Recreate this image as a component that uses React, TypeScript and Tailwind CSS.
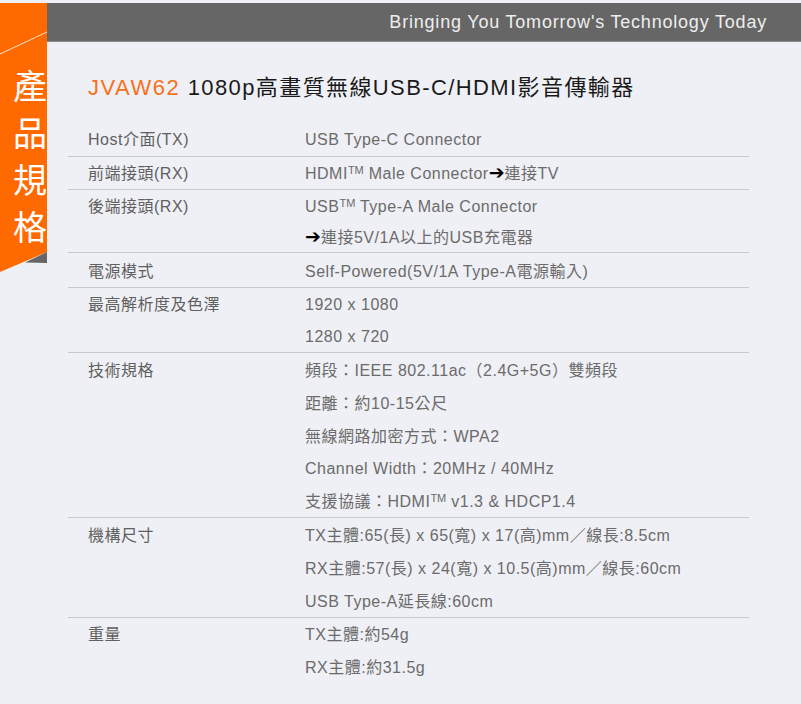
import React from "react";

type Row = { label: string; lines: React.ReactNode[]; lh: string; cls?: string };

const Arrow = () => (
  <span className="inline-block leading-[0] text-[19px] text-black font-['DejaVu_Sans'] tracking-normal">➔</span>
);
const TM = () => <span className="inline-block leading-[0] text-[11px] align-[5px] tracking-normal">TM</span>;

const rows: Row[] = [
  { label: "Host介面(TX)", lh: "h-[33px] leading-[33px]", lines: ["USB Type-C Connector"] },
  {
    label: "前端接頭(RX)",
    lh: "h-[32px] leading-[33px]",
    lines: [
      <>
        HDMI<TM /> Male Connector<Arrow />連接TV
      </>,
    ],
  },
  {
    label: "後端接頭(RX)",
    lh: "h-[31px] leading-[33px]",
    lines: [
      <>
        USB<TM /> Type-A Male Connector
      </>,
      <>
        <Arrow />連接5V/1A以上的USB充電器
      </>,
    ],
  },
  { label: "電源模式", cls: "pt-[2px]", lh: "h-[32px] leading-[33px]", lines: ["Self-Powered(5V/1A Type-A電源輸入)"] },
  { label: "最高解析度及色澤", lh: "h-[32px] leading-[33px]", lines: ["1920 x 1080", "1280 x 720"] },
  {
    label: "技術規格",
    lh: "h-[32.8px] leading-[35px]",
    lines: [
      "頻段：IEEE 802.11ac（2.4G+5G）雙頻段",
      "距離：約10-15公尺",
      "無線網路加密方式：WPA2",
      "Channel Width：20MHz / 40MHz",
      <>
        支援協議：HDMI<TM /> v1.3 &amp; HDCP1.4
      </>,
    ],
  },
  {
    label: "機構尺寸",
    lh: "h-[33px] leading-[35px]",
    lines: [
      "TX主體:65(長) x 65(寬) x 17(高)mm／線長:8.5cm",
      "RX主體:57(長) x 24(寬) x 10.5(高)mm／線長:60cm",
      "USB Type-A延長線:60cm",
    ],
  },
  { label: "重量", lh: "h-[33px] leading-[34px]", lines: ["TX主體:約54g", "RX主體:約31.5g"] },
];

export default function App() {
  return (
    <div className="w-[801px] h-[704px] overflow-hidden bg-[#eff0f5] pt-[3px] flex items-start font-['Liberation_Sans','Noto_Sans_CJK_TC',sans-serif]">
      {/* orange side tab */}
      <div className="relative w-[47px] h-[270px] shrink-0">
        <svg className="absolute inset-0" width="47" height="270" viewBox="0 0 47 270">
          <polygon points="0,0 47,0 47,249 0,269" fill="#fe6a00" />
          <polygon points="25,259.6 47,249 47,260" fill="#666666" />
          <line x1="0" y1="51" x2="47" y2="29" stroke="#ffffff" strokeOpacity="0.8" strokeWidth="1" />
        </svg>
        <div className="relative flex flex-col pl-[13px] pt-[58px] text-white text-[34px] leading-[47px] font-['Noto_Sans_CJK_TC',sans-serif]">
          <span>產</span>
          <span>品</span>
          <span>規</span>
          <span>格</span>
        </div>
      </div>

      <div className="flex-1">
        <div className="h-[39px] bg-[#666666] border-b border-[#8c8c8c] flex items-center justify-end pr-[34px]">
          <span className="text-[#eeeeee] text-[18px] tracking-[0.8px]">
            Bringing You Tomorrow's Technology Today
          </span>
        </div>

        <div className="mt-[31px] pl-[41px] h-[30px] leading-[30px] text-[22px] tracking-[1.4px] text-[#1a1a1a]">
          <span className="text-[#f7711c] tracking-[1.5px]">JVAW62</span> 1080p高畫質無線USB-C/HDMI影音傳輸器
        </div>

        <div className="mt-[20px] ml-[21px] w-[681px] text-[16px] tracking-[0.5px]">
          {rows.map((r, i) => (
            <div
              key={i}
              className={`flex ${r.cls ?? ""} ${i < rows.length - 1 ? "border-b border-[#c9c9c9]" : ""}`}
            >
              <div className={`w-[237px] pl-[20px] text-[#606060] ${r.lh}`}>{r.label}</div>
              <div className="flex-1 text-[#6b6b6b]">
                {r.lines.map((l, j) => (
                  <div key={j} className={`whitespace-nowrap ${r.lh}`}>
                    {l}
                  </div>
                ))}
              </div>
            </div>
          ))}
        </div>
      </div>
    </div>
  );
}
